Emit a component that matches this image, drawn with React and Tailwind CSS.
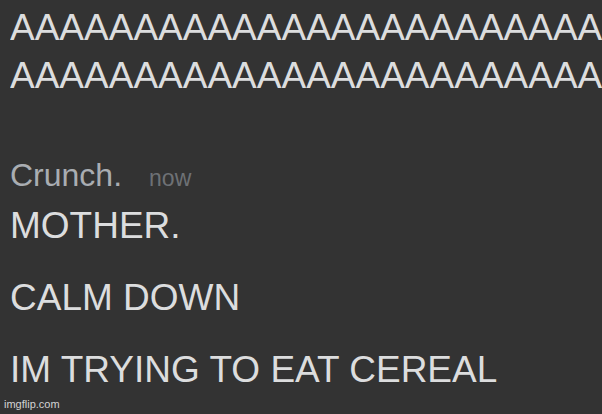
export default function App() {
  const font = { fontFamily: '"Liberation Sans", Arial, sans-serif' };
  return (
    <main
      className="relative h-[414px] w-[602px] overflow-hidden bg-[#333333] pl-[10px] text-[#dcddde]"
      style={font}
    >
      <div className="overflow-hidden pt-[4px] text-[37px] leading-[48px] whitespace-nowrap">
        <div>AAAAAAAAAAAAAAAAAAAAAAAAAAAAAAAAAAAA</div>
        <div>AAAAAAAAAAAAAAAAAAAAAAAAAAAAAAAAAAAA</div>
      </div>

      <div className="mt-[57px] flex items-baseline leading-[36px]">
        <span className="text-[32px] text-[#a9adb2]">Crunch.</span>
        <span className="ml-[27px] text-[23px] text-[#6e7175]">now</span>
      </div>

      <div className="mt-[6px] flex flex-col gap-6 text-[37px] leading-[48px]">
        <p>MOTHER.</p>
        <p>CALM DOWN</p>
        <p>IM TRYING TO EAT CEREAL</p>
      </div>

      <span className="absolute bottom-[3px] left-[4px] text-[11px] leading-[14px] text-[#d4d4d4]">
        imgflip.com
      </span>
    </main>
  );
}
